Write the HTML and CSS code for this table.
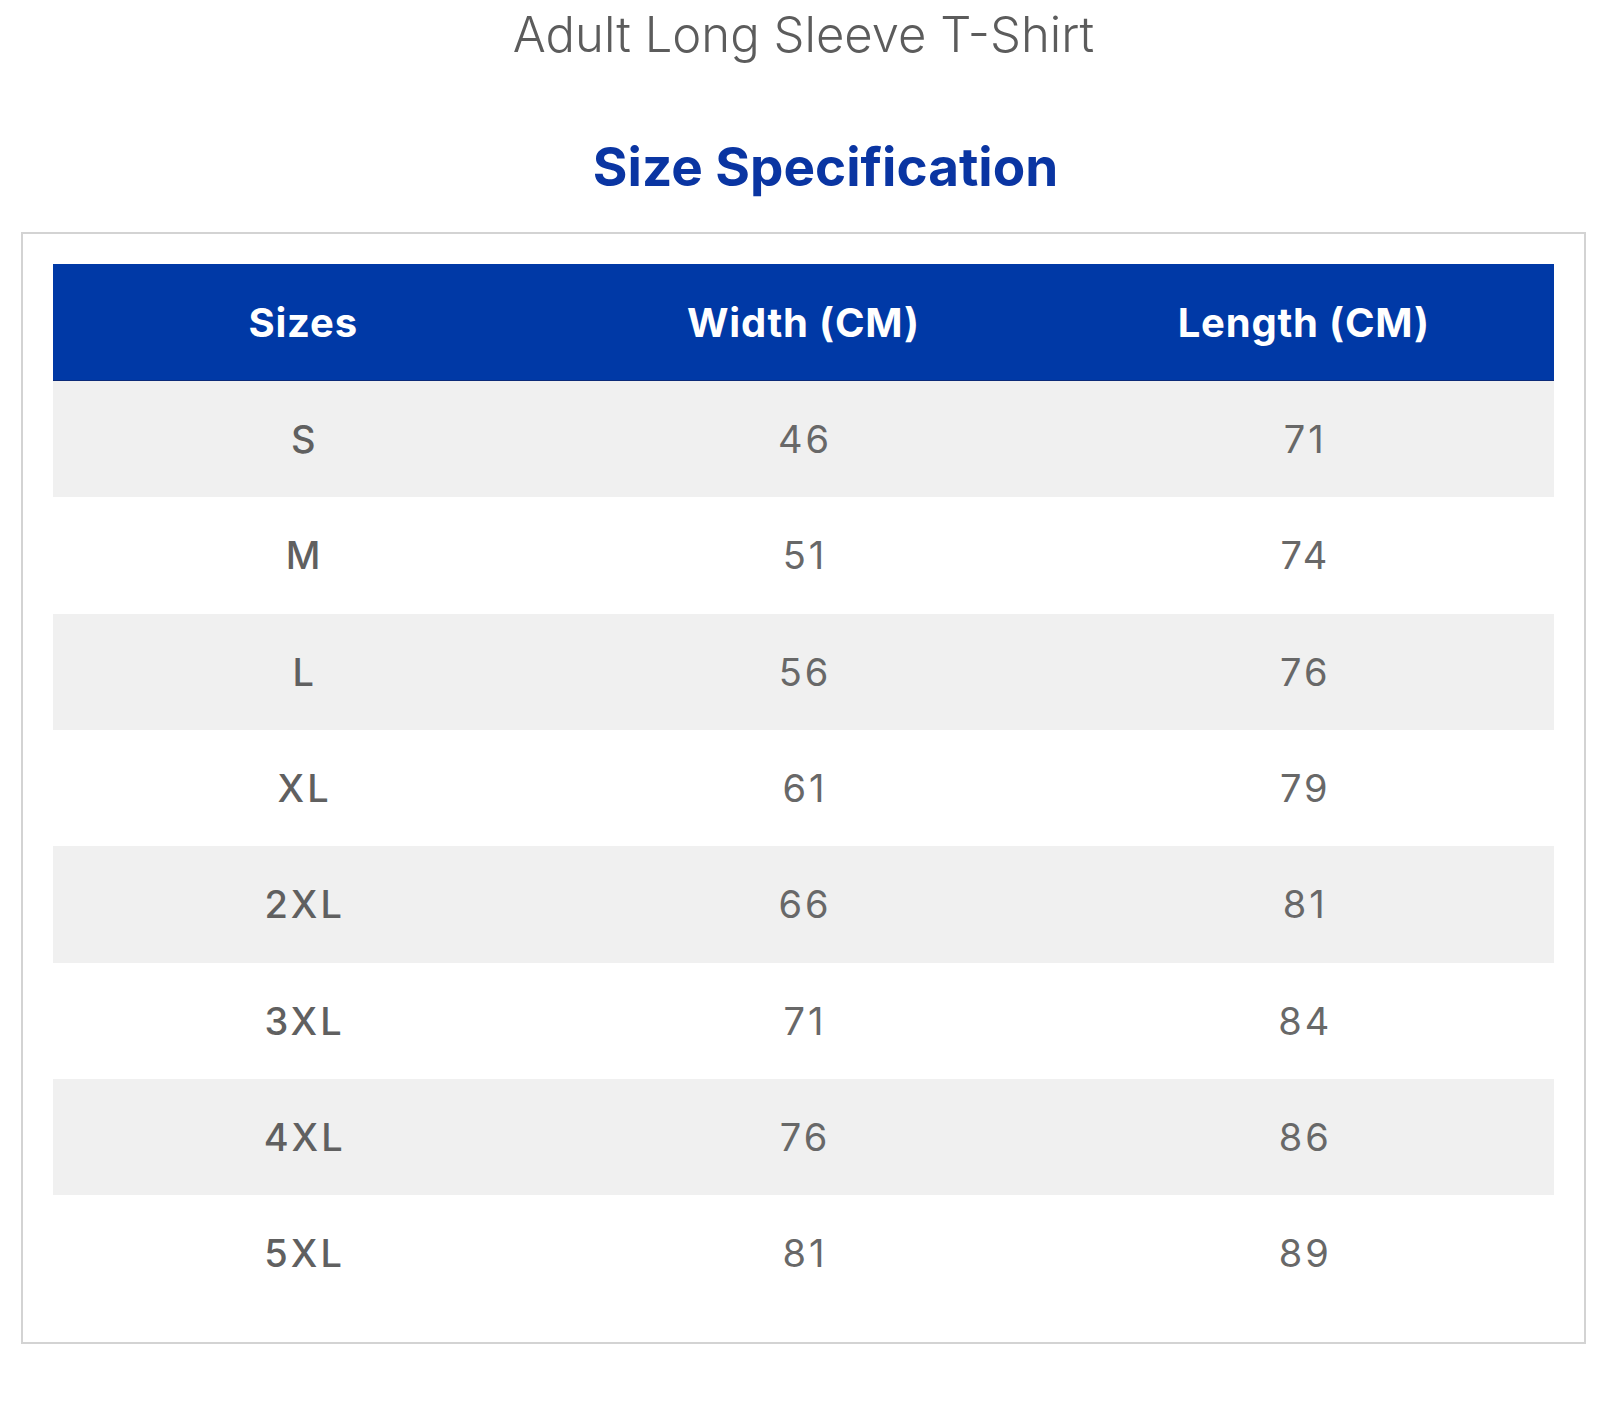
FILE: index.html
```html
<!DOCTYPE html>
<html lang="en">
<head>
<meta charset="utf-8">
<title>Adult Long Sleeve T-Shirt – Size Specification</title>
<link rel="stylesheet" href="styles.css">
</head>
<body>
<main class="page">
  <h1 class="title">Adult Long Sleeve T-Shirt</h1>
  <h2 class="heading">Size Specification</h2>
  <section class="box">
    <table class="sizes">
      <thead>
        <tr><th>Sizes</th><th>Width (CM)</th><th>Length (CM)</th></tr>
      </thead>
      <tbody>
        <tr><td class="size">S</td><td>46</td><td>71</td></tr>
        <tr><td class="size">M</td><td>51</td><td>74</td></tr>
        <tr><td class="size">L</td><td>56</td><td>76</td></tr>
        <tr><td class="size">XL</td><td>61</td><td>79</td></tr>
        <tr><td class="size">2XL</td><td>66</td><td>81</td></tr>
        <tr><td class="size">3XL</td><td>71</td><td>84</td></tr>
        <tr><td class="size">4XL</td><td>76</td><td>86</td></tr>
        <tr><td class="size">5XL</td><td>81</td><td>89</td></tr>
      </tbody>
    </table>
  </section>
</main>
</body>
</html>
```

FILE: styles.css
```css
html, body {
  margin: 0;
  padding: 0;
  background: #ffffff;
}

body {
  font-family: Inter, "Noto Sans", "Liberation Sans", sans-serif;
}

.page {
  width: 1565px;
  margin-left: 21px;
  padding-top: 5px;
}

.title {
  margin: 0;
  text-align: center;
  font-size: 49px;
  line-height: 60px;
  font-weight: 300;
  color: #5c5c5c;
}

.heading {
  margin: 67px 0 30px 0;
  padding-left: 44px;
  text-align: center;
  font-size: 53px;
  line-height: 70px;
  font-weight: 700;
  color: #0a35a2;
}

.box {
  border: 2px solid #d3d3d3;
  padding: 30px;
}

.sizes {
  width: 100%;
  border-collapse: collapse;
  table-layout: fixed;
}

.sizes th {
  height: 116px;
  padding: 0;
  background: #0039a6;
  border-bottom: 1px solid #0b2a78;
  color: #ffffff;
  font-size: 40px;
  font-weight: 700;
  letter-spacing: 0.8px;
  text-align: center;
  vertical-align: middle;
}

.sizes td {
  height: 116.33px;
  padding: 0 0 0 3px;
  text-align: center;
  vertical-align: middle;
  font-size: 38px;
  font-weight: 400;
  letter-spacing: 3px;
  color: #686868;
}

.sizes tbody tr:nth-child(odd) td {
  background: #f0f0f0;
}

.sizes td.size {
  font-weight: 500;
  color: #606060;
}
```
